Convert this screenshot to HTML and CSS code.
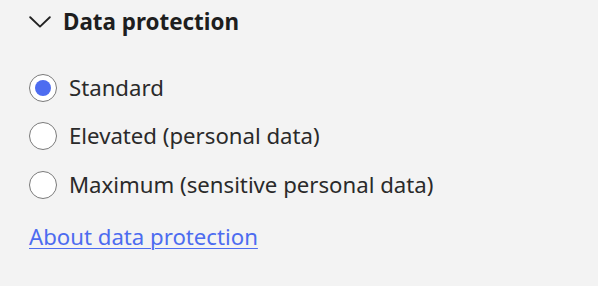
FILE: index.html
```html
<!DOCTYPE html>
<html lang="en">
<head>
<meta charset="utf-8">
<link rel="stylesheet" href="styles.css">
</head>
<body>
<section class="panel">
  <h2 class="panel-title">
    <svg class="chevron" viewBox="0 0 22 12" width="22" height="12" aria-hidden="true">
      <path d="M1.2 1.2 L11 10.6 L20.8 1.2" fill="none" stroke="#222" stroke-width="1.9" stroke-linecap="round" stroke-linejoin="round"/>
    </svg>
    <span>Data protection</span>
  </h2>
  <div class="options">
    <label class="option">
      <span class="radio checked"></span>
      <span class="option-label">Standard</span>
    </label>
    <label class="option">
      <span class="radio"></span>
      <span class="option-label">Elevated (personal data)</span>
    </label>
    <label class="option">
      <span class="radio"></span>
      <span class="option-label">Maximum (sensitive personal data)</span>
    </label>
  </div>
  <a class="about-link" href="#">About data protection</a>
</section>
</body>
</html>
```
FILE: styles.css
```css
html, body {
  margin: 0;
  padding: 0;
  background: #f3f3f3;
}
body {
  font-family: "Noto Sans", "Open Sans", sans-serif;
  color: #2a2a2a;
}
.panel {
  padding: 8px 0 0 29px;
  display: flex;
  flex-direction: column;
  align-items: flex-start;
}
.panel-title {
  margin: 0;
  display: flex;
  align-items: center;
  gap: 12px;
  font-size: 22.4px;
  font-weight: 700;
  line-height: 28px;
  color: #1e1e1e;
}
.chevron {
  display: block;
}
.options {
  margin-top: 37.5px;
  display: flex;
  flex-direction: column;
  gap: 20.5px;
}
.option {
  display: flex;
  align-items: center;
  gap: 12px;
  height: 28px;
  font-size: 22.2px;
  line-height: 28px;
}
.radio {
  box-sizing: border-box;
  width: 28px;
  height: 28px;
  border-radius: 50%;
  border: 1px solid #7a7a7a;
  background: #ffffff;
  display: flex;
  align-items: center;
  justify-content: center;
  flex: none;
}
.radio.checked::after {
  content: "";
  width: 16px;
  height: 16px;
  border-radius: 50%;
  background: #4d6cf0;
}
.about-link {
  margin-top: 24px;
  font-size: 22.2px;
  line-height: 28px;
  color: #4d6cf0;
  text-decoration: underline;
  text-decoration-thickness: 1px;
  text-underline-offset: 3px;
}
```
